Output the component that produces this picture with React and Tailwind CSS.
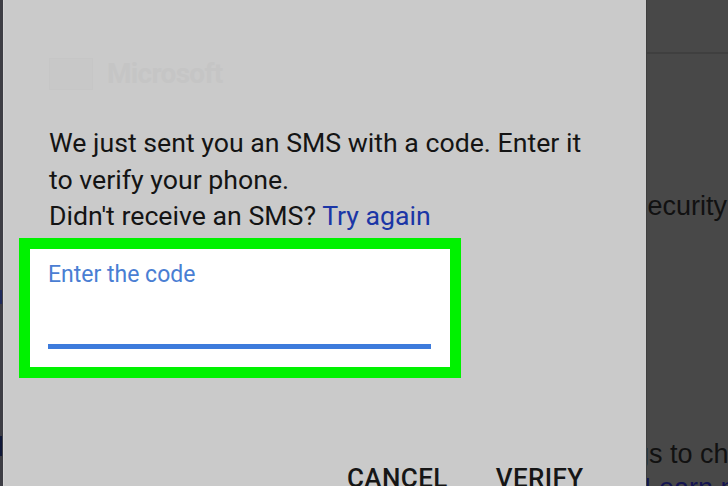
export default function App() {
  return (
    <div className="flex h-[486px] w-[728px] overflow-hidden bg-[#484848] font-['Roboto',sans-serif]">
      {/* strip of the page behind, left */}
      <div className="flex w-[3px] shrink-0 flex-col bg-[#3d3d44]">
        <div className="mt-[290px] h-[14px] w-[2px] bg-[#1f2a5a]" />
        <div className="mt-[132px] h-[20px] w-[2px] bg-[#101838]" />
      </div>

      {/* dialog */}
      <div className="flex w-[643px] shrink-0 flex-col overflow-hidden border-l border-[#d4d4d4] bg-[#cacaca]">
        <div className="flex shrink-0 items-center gap-[14px] pl-[45px] pt-[58px]">
          <div className="h-[32px] w-[44px] border border-[#c6c6c6] bg-[#c8c8c8]" />
          <span className="text-[28px] font-bold leading-[32px] tracking-tight text-[#c5c5c5]">Microsoft</span>
        </div>

        <p className="mt-[35px] shrink-0 pl-[45px] text-[26.7px] leading-[36.5px] text-[#141414]">
          We just sent you an SMS with a code. Enter it
          <br />
          to verify your phone.
          <br />
          Didn't receive an SMS? <span className="text-[#1b36a6]">Try again</span>
        </p>

        <div className="ml-[15px] mt-[3px] h-[140px] w-[442px] shrink-0 border-[11px] border-[#00f200] bg-white px-[18px] pt-[12px]">
          <div className="text-[23px] leading-[28px] text-[#4a7ed3]">Enter the code</div>
          <div className="mt-[55px] h-[5px] w-[383px] bg-[#3d7bdc]" />
        </div>

        <div className="mt-[82px] flex shrink-0 gap-[48px] pl-[343px]">
          <span className="text-[26px] font-medium leading-[36px] tracking-[0.4px] text-[#161616]">CANCEL</span>
          <span className="text-[26px] font-medium leading-[36px] tracking-[0.4px] text-[#161616]">VERIFY</span>
        </div>
      </div>

      {/* page behind, right */}
      <div className="flex min-w-0 flex-1 flex-col overflow-hidden border-l border-[#3e3e3e]">
        <div className="mt-[52px] h-[2px] shrink-0 bg-[#3f3f3f]" />
        <div className="ml-[-13px] mt-[136px] shrink-0 whitespace-nowrap font-['Liberation_Sans',sans-serif] text-[27px] leading-[32px] text-[#111111]">
          security
        </div>
        <div className="ml-[-13px] mt-[216px] shrink-0 whitespace-nowrap font-['Liberation_Sans',sans-serif] text-[27px] leading-[32px] text-[#111111]">
          gs to ch
        </div>
        <div className="ml-[-3px] mt-[2px] shrink-0 whitespace-nowrap font-['Liberation_Sans',sans-serif] text-[27px] leading-[32px] text-[#141450]">
          Learn m
        </div>
      </div>
    </div>
  );
}
